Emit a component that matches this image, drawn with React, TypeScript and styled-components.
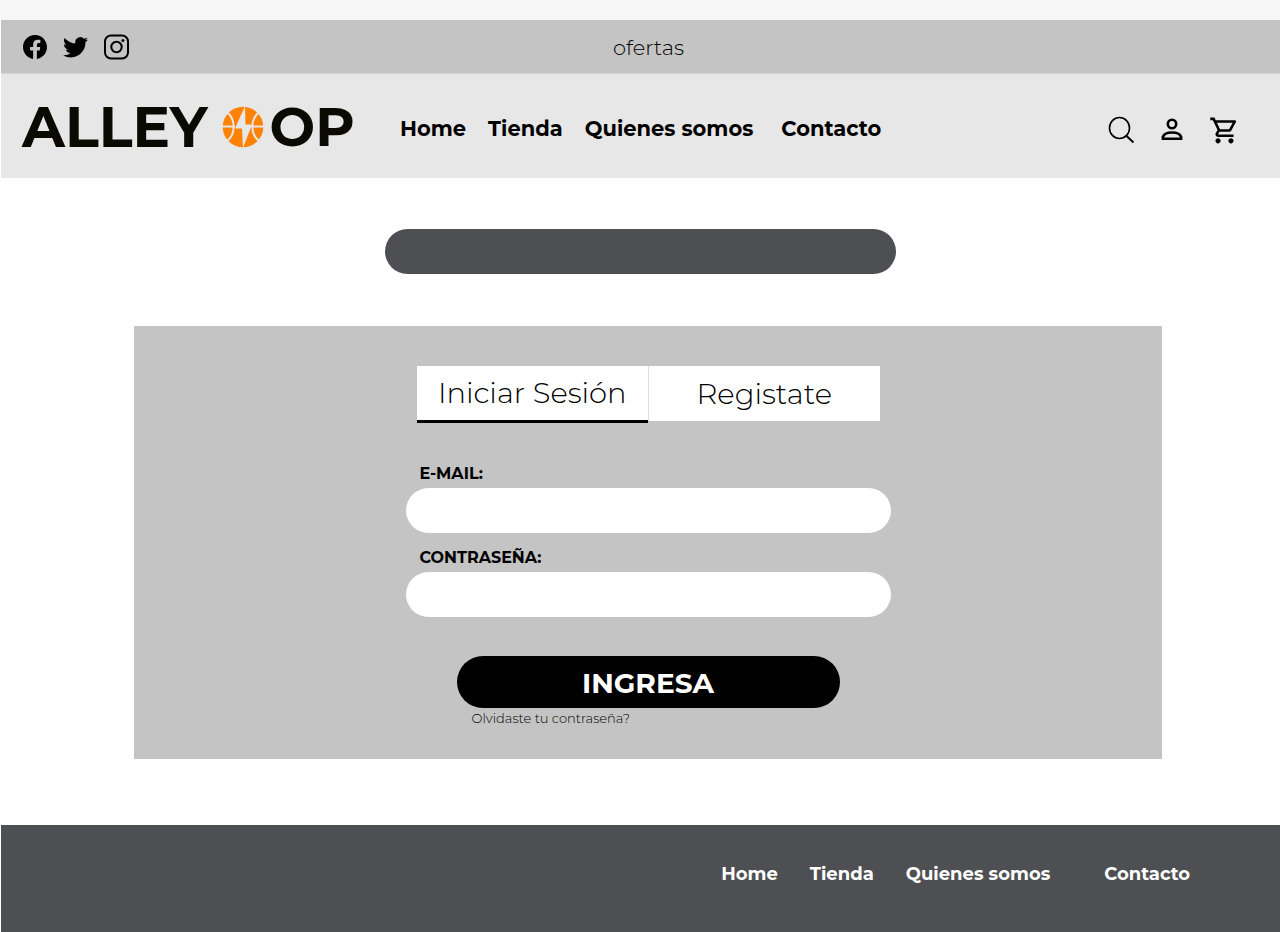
import React from "react";
import styled, { createGlobalStyle } from "styled-components";
import { BsFacebook, BsTwitter } from "react-icons/bs";
import { MdOutlineShoppingCart } from "react-icons/md";

const GlobalStyle = createGlobalStyle`
  *, *::before, *::after { box-sizing: border-box; }
  body {
    margin: 0;
    background: #ffffff;
    color: #000000;
    font-family: Montserrat, Inter, "Open Sans", sans-serif;
  }
  a { color: inherit; text-decoration: none; }
  button, input { font: inherit; color: inherit; }
`;

const Page = styled.div`
  display: flex;
  flex-direction: column;
  min-height: 100vh;
  padding-left: 1px;
  border-top: 20px solid #f7f7f7;
`;

const TopBar = styled.div`
  display: grid;
  grid-template-columns: 1fr auto 1fr;
  align-items: center;
  height: 54px;
  padding: 0 6px 0 22px;
  background: #c4c4c4;
  border-bottom: 1px solid #d6d6d6;
`;

const SocialLinks = styled.div`
  display: flex;
  align-items: center;
  gap: 16px;

  a { display: flex; }
`;

const Offers = styled.a`
  padding-top: 2px;
  font-size: 21px;
  line-height: 28px;
  font-weight: 300;
`;

const Header = styled.header`
  display: flex;
  align-items: center;
  height: 104px;
  padding: 6px 40px 0 21px;
  background: #e7e7e7;
`;

const Logo = styled.a`
  display: flex;
  align-items: center;
  flex: none;
  width: 378px;
  padding-bottom: 4px;
  gap: 6px;
  line-height: 64px;
  font-weight: 700;
  color: #0a0a02;
`;

const LogoWord = styled.span<{ $large?: boolean }>`
  font-size: ${(p) => (p.$large ? 56 : 54)}px;
  margin-right: ${(p) => (p.$large ? 8 : 0)}px;
`;

const MainNav = styled.nav`
  display: flex;
  flex: 1;
  gap: 22px;
  font-size: 21px;
  line-height: 28px;
  font-weight: 700;
  white-space: nowrap;

  a:last-child { margin-left: 6px; }
`;

const Tools = styled.div`
  display: flex;
  align-items: center;
  gap: 23px;
`;

const IconButton = styled.button`
  display: flex;
  padding: 2px 0 0;
  border: 0;
  background: none;
  cursor: pointer;
`;

const Main = styled.main`
  flex: 1;
  display: flex;
  flex-direction: column;
  padding: 51px 118px 66px 133px;
`;

const Banner = styled.div`
  align-self: center;
  width: 511px;
  max-width: 100%;
  height: 45px;
  margin: 0 16px 52px 0;
  border-radius: 23px;
  background: #4e4f52;
`;

const Panel = styled.section`
  flex: 1;
  display: flex;
  flex-direction: column;
  align-items: center;
  padding: 40px 24px 24px;
  background: #c4c4c4;
`;

const Tabs = styled.div`
  display: grid;
  grid-template-columns: 1fr 1fr;
  width: 463px;
  max-width: 100%;
  height: 55px;
  margin-bottom: 41px;
`;

const Tab = styled.button<{ $active?: boolean }>`
  height: ${(p) => (p.$active ? 57 : 55)}px;
  padding: 0;
  border: 0;
  border-left: ${(p) => (p.$active ? "0" : "1px solid #dcdcdc")};
  border-bottom: ${(p) => (p.$active ? "3px solid #000000" : "0")};
  background: #ffffff;
  font-size: 29px;
  line-height: 36px;
  font-weight: 300;
  cursor: pointer;
`;

const Form = styled.form`
  display: flex;
  flex-direction: column;
  width: 485px;
  max-width: 100%;
`;

const Field = styled.div`
  display: flex;
  flex-direction: column;
  margin-bottom: 13px;
`;

const Label = styled.label`
  padding: 0 14px 2px;
  font-size: 16px;
  line-height: 24px;
  font-weight: 700;
`;

const TextInput = styled.input`
  height: 45px;
  padding: 0 20px;
  border: 0;
  border-radius: 23px;
  background: #ffffff;
`;

const Actions = styled.div`
  display: flex;
  flex-direction: column;
  margin: 26px 51px 0;
`;

const Submit = styled.button`
  height: 52px;
  padding: 2px 0 0;
  border: 0;
  border-radius: 26px;
  background: #000000;
  color: #ffffff;
  font-size: 28px;
  line-height: 36px;
  font-weight: 700;
  cursor: pointer;
`;

const ForgotLink = styled.a`
  align-self: flex-start;
  padding-left: 15px;
  font-size: 13px;
  line-height: 20px;
  font-weight: 300;
`;

const Footer = styled.footer`
  height: 107px;
  padding: 36px 90px 0 24px;
  background: #4e4f52;
`;

const FooterNav = styled.nav`
  display: flex;
  justify-content: flex-end;
  gap: 32px;
  color: #ffffff;
  font-size: 18px;
  line-height: 26px;
  font-weight: 700;

  a:last-child { margin-left: 22px; }
`;

const InstagramIcon = () => (
  <svg width="26" height="26" viewBox="0 0 26 26" fill="none" stroke="#000000">
    <rect x="1" y="1.5" width="23" height="23" rx="6" strokeWidth="2" />
    <circle cx="12.5" cy="13" r="5.2" strokeWidth="2" />
    <circle cx="18.9" cy="6.6" r="1.5" fill="#000000" stroke="none" />
  </svg>
);

const BallIcon = () => (
  <svg width="42" height="42" viewBox="0 0 42 42">
    <circle cx="21" cy="21" r="20.3" fill="#ff8205" />
    <g fill="none" stroke="#e7e7e7" strokeWidth="2">
      <path d="M0 20.6H13M29 20.6H42" />
      <path d="M5 6C14 14 14 28 4.500 35.500" />
      <path d="M37 6C28 14 28 28 37.500 35.500" />
    </g>
    <path d="M23 0 13 22.500H20L21 42 30 18.500H23.500Z" fill="#e7e7e7" />
  </svg>
);

const SearchIcon = () => (
  <svg width="28" height="28" viewBox="0 0 28 28" fill="none" stroke="#000000" strokeWidth="1.600">
    <ellipse cx="12.500" cy="12" rx="10" ry="10.500" />
    <path d="M19.300 19.800 26.500 26.500" strokeWidth="2" />
  </svg>
);

const PersonIcon = () => (
  <svg width="28" height="28" viewBox="0 0 28 28" fill="none" stroke="#000000" strokeWidth="2.600">
    <circle cx="14" cy="8" r="4.200" />
    <path d="M4.900 22.800V20.800C6.200 17.600 10 16.500 14 16.500S21.800 17.600 23.100 20.800V22.800Z" />
  </svg>
);

const sections = ["Home", "Tienda", "Quienes somos", "Contacto"];
const links = sections.map((name) => (
  <a key={name} href="#">{name}</a>
));

export default function App() {
  return (
    <>
      <GlobalStyle />
      <Page>
        <TopBar>
          <SocialLinks>
            <a href="#" aria-label="Facebook"><BsFacebook size={24} /></a>
            <a href="#" aria-label="Twitter"><BsTwitter size={25} /></a>
            <a href="#" aria-label="Instagram"><InstagramIcon /></a>
          </SocialLinks>
          <Offers href="#">ofertas</Offers>
        </TopBar>
        <Header>
          <Logo href="#">
            <LogoWord $large>ALLEY</LogoWord>
            <BallIcon />
            <LogoWord>OP</LogoWord>
          </Logo>
          <MainNav>{links}</MainNav>
          <Tools>
            <IconButton aria-label="Buscar"><SearchIcon /></IconButton>
            <IconButton aria-label="Cuenta"><PersonIcon /></IconButton>
            <IconButton aria-label="Carrito"><MdOutlineShoppingCart size={31} /></IconButton>
          </Tools>
        </Header>
        <Main>
          <Banner />
          <Panel>
            <Tabs role="tablist">
              <Tab role="tab" aria-selected="true" $active>Iniciar Sesión</Tab>
              <Tab role="tab" aria-selected="false">Registate</Tab>
            </Tabs>
            <Form onSubmit={(e) => e.preventDefault()}>
              <Field>
                <Label htmlFor="email">E-MAIL:</Label>
                <TextInput id="email" type="email" />
              </Field>
              <Field>
                <Label htmlFor="password">CONTRASEÑA:</Label>
                <TextInput id="password" type="password" />
              </Field>
              <Actions>
                <Submit type="submit">INGRESA</Submit>
                <ForgotLink href="#">Olvidaste tu contraseña?</ForgotLink>
              </Actions>
            </Form>
          </Panel>
        </Main>
        <Footer>
          <FooterNav>{links}</FooterNav>
        </Footer>
      </Page>
    </>
  );
}
